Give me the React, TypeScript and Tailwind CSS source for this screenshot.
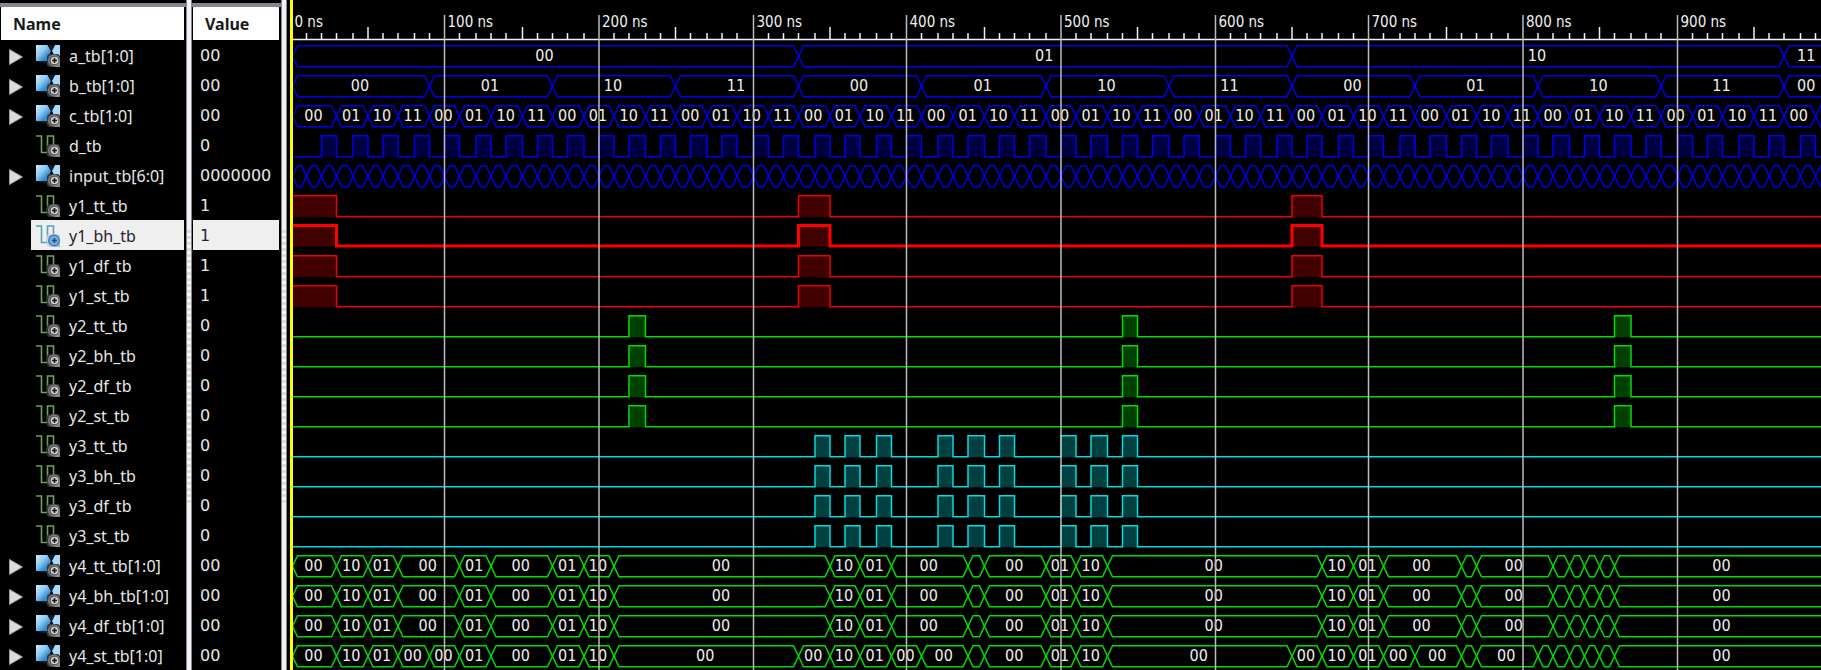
import React, { useState } from "react";

type Tone = "blue" | "red" | "green" | "cyan";
type Segment = [start: number, label: string];

interface Signal {
  name: string;
  value: string;
  tone: Tone;
  bus?: Segment[];
  high?: [number, number][];
}

const END = 1000;
const HEADER = 40;
const ROW = 30;

const TONES: Record<Tone, { line: string; fill: string }> = {
  blue: { line: "#0000ee", fill: "#000040" },
  red: { line: "#ee0000", fill: "#400000" },
  green: { line: "#00dc00", fill: "#004000" },
  cyan: { line: "#00dce0", fill: "#004040" },
};

const timeToX = (t: number) => 4.5 + Math.floor(t * 1.0267) * 1.5;

const count = (n: number) => Array.from({ length: n }, (_, i) => i);
const CODES = ["00", "01", "10", "11"];

const busA: Segment[] = [[0, "00"], [330, "01"], [650, "10"], [970, "11"]];
const busB: Segment[] = count(13).map((i) => [i === 0 ? 0 : 10 + i * 80, CODES[i % 4]]);
const busC: Segment[] = count(50).map((i) => [i === 0 ? 0 : 10 + i * 20, i === 49 ? "" : CODES[i % 4]]);
const busInput: Segment[] = count(100).map((i) => [i * 10, ""]);
const clockD = count(49).map((i): [number, number] => [20 + i * 20, 30 + i * 20]);

const busY4: Segment[] = [
  [0, "00"], [30, "10"], [50, "01"], [70, "00"], [110, "01"], [130, "00"], [170, "01"], [190, "10"],
  [210, "00"], [350, "10"], [370, "01"], [390, "00"], [440, ""], [450, "00"], [490, "01"], [510, "10"],
  [530, "00"], [670, "10"], [690, "01"], [710, "00"], [760, ""], [770, "00"], [820, ""], [830, ""],
  [840, ""], [850, ""], [860, "00"],
];
const busY4St: Segment[] = [
  ...busY4,
  ...([[90, "00"], [330, "00"], [410, "00"], [650, "00"], [730, "00"], [810, ""]] as Segment[]),
].sort((p, q) => p[0] - q[0]);

const highY1: [number, number][] = [[0, 30], [330, 350], [650, 670]];
const highY2: [number, number][] = [[220, 230], [540, 550], [860, 870]];
const highY3: [number, number][] = [340, 360, 380, 420, 440, 460, 500, 520, 540].map((t) => [t, t + 10]);

const KINDS = ["tt", "bh", "df", "st"];

const SIGNALS: Signal[] = [
  { name: "a_tb[1:0]", value: "00", tone: "blue", bus: busA },
  { name: "b_tb[1:0]", value: "00", tone: "blue", bus: busB },
  { name: "c_tb[1:0]", value: "00", tone: "blue", bus: busC },
  { name: "d_tb", value: "0", tone: "blue", high: clockD },
  { name: "input_tb[6:0]", value: "0000000", tone: "blue", bus: busInput },
  ...KINDS.map((k): Signal => ({ name: `y1_${k}_tb`, value: "1", tone: "red", high: highY1 })),
  ...KINDS.map((k): Signal => ({ name: `y2_${k}_tb`, value: "0", tone: "green", high: highY2 })),
  ...KINDS.map((k): Signal => ({ name: `y3_${k}_tb`, value: "0", tone: "cyan", high: highY3 })),
  ...KINDS.map((k): Signal => ({
    name: `y4_${k}_tb[1:0]`,
    value: "00",
    tone: "green",
    bus: k === "st" ? busY4St : busY4,
  })),
];

function Gear({ selected }: { selected?: boolean }) {
  return (
    <g>
      <rect x="11" y="9" width="13" height="13" fill={selected ? "#c3d6e8" : "#383838"} rx="3" />
      <path d="M24 16V22H18Z" fill={selected ? "#9dbbd8" : "#8c8c8c"} />
      <circle cx="18" cy="15.5" r="6" fill={selected ? "#3f78b8" : "#858585"} />
      <circle cx="18" cy="15.5" r="4.8" fill={selected ? "#6fa5dc" : "#4e4e4e"} />
      <circle cx="18.5" cy="15.5" r="3.8" fill={selected ? "#78addf" : "#d2d2d2"} />
      <path d="M18.5 13v5M16 15.5h5" stroke={selected ? "#1c4c86" : "#161616"} strokeWidth="1.6" />
    </g>
  );
}

function BusIcon() {
  return (
    <svg width="24" height="22" viewBox="0 0 24 22" aria-hidden="true">
      <defs>
        <linearGradient id="busFill" x1="0" y1="0" x2="1" y2="1">
          <stop offset="0" stopColor="#d4ecfa" />
          <stop offset="0.4" stopColor="#8ccbf2" />
          <stop offset="0.75" stopColor="#2b86cc" />
          <stop offset="1" stopColor="#66b4e8" />
        </linearGradient>
      </defs>
      <path d="M0 0H11.5L15 6L11 16H0Z" fill="url(#busFill)" />
      <path d="M24 0H19L16 6L18 10L24 12Z" fill="#a8dafa" />
      <path d="M11.5 0H19L15.3 6.5Z" fill="#0c1a28" />
      <path d="M0 16H12V19L3 17Z" fill="#10202e" />
      <Gear />
    </svg>
  );
}

function BitIcon({ selected }: { selected: boolean }) {
  return (
    <svg width="24" height="22" viewBox="0 0 24 22" aria-hidden="true">
      <path
        d="M0 1H5.5V17.5H11.5V1H17.5V10"
        fill="none"
        stroke={selected ? "#55a3b5" : "#6aa552"}
        strokeWidth="1.6"
      />
      <Gear selected={selected} />
    </svg>
  );
}

function Splitter() {
  return (
    <td
      rowSpan={SIGNALS.length + 1}
      className="w-[6px] border-x border-[#85858d] bg-[#f2f2f4] p-0 align-top"
    >
      <div className="mt-[230px] h-[275px] bg-[repeating-linear-gradient(to_bottom,#dcdce0_0px,#dcdce0_3px,#f6f6f6_3px,#f6f6f6_6px)]" />
    </td>
  );
}

function HeaderCell({ children }: { children: string }) {
  return (
    <th scope="col" className="h-[40px] p-0 text-left align-top">
      <div className="mt-[3px] h-[4px] bg-[#85858d]" />
      <div className="mr-[2px] ml-[1px] flex h-[33px] items-center bg-white pl-[12px] font-bold text-[#1a1a1a]">
        {children}
      </div>
    </th>
  );
}

function BusWave({ signal, y }: { signal: Signal; y: number }) {
  const segments = signal.bus!;
  const top = y + 5.75;
  const mid = y + 16.25;
  const bottom = y + 26.75;
  return (
    <g>
      {segments.map(([start, label], i) => {
        const a = timeToX(start) + (i === 0 ? 1 : 0);
        const b = timeToX(i + 1 < segments.length ? segments[i + 1][0] : END);
        return (
          <g key={start}>
            <path
              d={`M${a} ${mid}L${a + 5} ${top}H${b - 5}L${b} ${mid}L${b - 5} ${bottom}H${a + 5}Z`}
              fill="none"
              stroke={TONES[signal.tone].line}
              strokeWidth="1.5"
            />
            {label && (
              <text x={(a + b) / 2 - 1} y={y + 21} textAnchor="middle" fontSize="16" fill="#f0f0f0">
                {label}
              </text>
            )}
          </g>
        );
      })}
    </g>
  );
}

function BitWave({ signal, y, selected }: { signal: Signal; y: number; selected: boolean }) {
  const top = y + (selected ? 5.5 : 5.75);
  const bottom = y + (selected ? 26 : 26.75);
  const spans = signal.high!;
  const startsHigh = spans[0][0] === 0;
  let d = `M4 ${startsHigh ? top : bottom}`;
  spans.forEach(([from, to]) => {
    if (from > 0) d += `H${timeToX(from)}V${top}`;
    d += `H${timeToX(to)}V${bottom}`;
  });
  d += `H${timeToX(END)}`;
  return (
    <g>
      {spans.map(([from, to]) => (
        <rect
          key={from}
          x={timeToX(from)}
          y={top}
          width={timeToX(to) - timeToX(from)}
          height={bottom - top + 0.5}
          fill={TONES[signal.tone].fill}
        />
      ))}
      <path
        d={d}
        fill="none"
        stroke={selected ? "#ff0000" : TONES[signal.tone].line}
        strokeWidth={selected ? 3 : 1.5}
      />
    </g>
  );
}

function WaveCanvas({ selected }: { selected: number }) {
  const height = HEADER + SIGNALS.length * ROW;
  return (
    <svg
      width="100%"
      height={height}
      className="block font-['DejaVu_Sans_Condensed','DejaVu_Sans',sans-serif]"
      role="img"
      aria-label="Waveforms"
    >
      {count(100).map((i) => {
        if (i % 10 === 0) return null;
        const x = timeToX(i * 10);
        return <path key={i} d={`M${x} ${i % 5 === 0 ? 27 : 33}V39`} stroke="#f0f0f0" strokeWidth="1.5" />;
      })}
      <path d="M4 39.5H3000" stroke="#f0f0f0" strokeWidth="1.5" />
      {SIGNALS.map((s, i) =>
        s.bus ? (
          <BusWave key={s.name} signal={s} y={HEADER + i * ROW} />
        ) : (
          <BitWave key={s.name} signal={s} y={HEADER + i * ROW} selected={i === selected} />
        ),
      )}
      {count(10).map((i) => (
        <g key={i}>
          {i > 0 && (
            <path d={`M${timeToX(i * 100)} 15V${height}`} stroke="#bcbcbc" strokeWidth="1.5" />
          )}
          <text x={timeToX(i * 100) + 3} y="27" fontSize="15" fill="#f0f0f0">
            {`${i * 100} ns`}
          </text>
        </g>
      ))}
      <rect x="3" y="0" width="3" height={height} fill="#ffff00" />
    </svg>
  );
}

export default function App() {
  const [selected, setSelected] = useState(6);
  return (
    <main className="flex min-h-screen overflow-hidden bg-black font-['Noto_Sans','Open_Sans',sans-serif] text-[16px] leading-[20px] text-[#e8e8e8]">
      <table className="w-[287px] shrink-0 table-fixed border-separate border-spacing-0 self-start">
        <colgroup>
          <col className="w-[186px]" />
          <col className="w-[6px]" />
          <col className="w-[89px]" />
          <col className="w-[6px]" />
        </colgroup>
        <tbody>
          <tr>
            <HeaderCell>Name</HeaderCell>
            <Splitter />
            <HeaderCell>Value</HeaderCell>
            <Splitter />
          </tr>
          {SIGNALS.map((s, i) => {
            const active = i === selected;
            const tone = active ? "bg-[#efefef] text-[#2a2030]" : "";
            return (
              <tr key={s.name} onClick={() => setSelected(i)}>
                <td className="h-[30px] p-0">
                  <div className="mr-[2px] flex h-[30px]">
                    <div className="flex w-[31px] items-center pt-[4px] pl-[9px]">
                      {s.bus && (
                        <button type="button" aria-label={`Expand ${s.name}`} className="block">
                          <svg width="14" height="16" viewBox="0 0 14 16" aria-hidden="true">
                            <path d="M0.5 0.5L13.5 8L0.5 15.5Z" fill="#dcdcdc" stroke="#9a9a9a" />
                          </svg>
                        </button>
                      )}
                    </div>
                    <div className={`flex flex-1 items-center gap-[9px] pt-[2px] pl-[5px] whitespace-nowrap ${tone}`}>
                      {s.bus ? <BusIcon /> : <BitIcon selected={active} />}
                      {s.name}
                    </div>
                  </div>
                </td>
                <td className="h-[30px] p-0">
                  <div
                    className={`mr-[2px] ml-[1px] flex h-[30px] items-center pt-[2px] pl-[7px] font-['DejaVu_Sans',sans-serif] ${tone}`}
                  >
                    {s.value}
                  </div>
                </td>
              </tr>
            );
          })}
        </tbody>
      </table>
      <section className="min-w-0 flex-1 overflow-hidden">
        <WaveCanvas selected={selected} />
      </section>
    </main>
  );
}
